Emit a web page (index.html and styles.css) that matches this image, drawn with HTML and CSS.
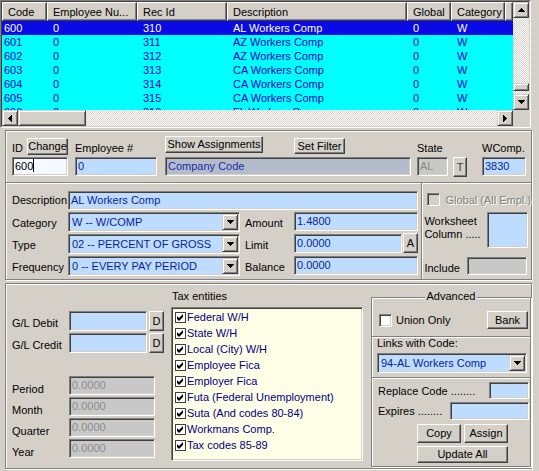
FILE: index.html
```html
<!DOCTYPE html>
<html>
<head>
  <meta charset="utf-8">
  <title>Deduction Codes</title>
  <link rel="stylesheet" href="styles.css">
</head>
<body>

<!-- code list -->
<div class="grid-view">
  <div class="gv-inner">
    <div class="gv-main">
      <div class="gv-table">
        <div class="gv-head">
          <div class="hc c1">Code</div>
          <div class="hc c2">Employee Nu...</div>
          <div class="hc c3">Rec Id</div>
          <div class="hc c4">Description</div>
          <div class="hc c5">Global</div>
          <div class="hc c6">Category</div>
          <div class="hc c7"></div>
        </div>
        <div class="gv-body">
          <div class="gv-row selected"><span class="c1">600</span><span class="c2">0</span><span class="c3">310</span><span class="c4">AL Workers Comp</span><span class="c5">0</span><span class="c6">W</span></div>
          <div class="gv-row"><span class="c1">601</span><span class="c2">0</span><span class="c3">311</span><span class="c4">AZ Workers Comp</span><span class="c5">0</span><span class="c6">W</span></div>
          <div class="gv-row"><span class="c1">602</span><span class="c2">0</span><span class="c3">312</span><span class="c4">AZ Workers Comp</span><span class="c5">0</span><span class="c6">W</span></div>
          <div class="gv-row"><span class="c1">603</span><span class="c2">0</span><span class="c3">313</span><span class="c4">CA Workers Comp</span><span class="c5">0</span><span class="c6">W</span></div>
          <div class="gv-row"><span class="c1">604</span><span class="c2">0</span><span class="c3">314</span><span class="c4">CA Workers Comp</span><span class="c5">0</span><span class="c6">W</span></div>
          <div class="gv-row"><span class="c1">605</span><span class="c2">0</span><span class="c3">315</span><span class="c4">CA Workers Comp</span><span class="c5">0</span><span class="c6">W</span></div>
          <div class="gv-row"><span class="c1">606</span><span class="c2">0</span><span class="c3">316</span><span class="c4">FL Workers Comp</span><span class="c5">0</span><span class="c6">W</span></div>
        </div>
      </div>
      <div class="vscroll">
        <div class="sb-btn"><svg width="7" height="4" viewBox="0 0 7 4"><path d="M3 0h1v1h-1z M2 1h3v1h-3z M1 2h5v1h-5z M0 3h7v1h-7z"/></svg></div>
        <div class="sb-track sb-track-top"></div>
        <div class="sb-btn sb-thumb-v"></div>
        <div class="sb-track"></div>
        <div class="sb-btn"><svg width="7" height="4" viewBox="0 0 7 4"><path d="M0 0h7v1h-7z M1 1h5v1h-5z M2 2h3v1h-3z M3 3h1v1h-1z"/></svg></div>
      </div>
    </div>
    <div class="gv-foot">
      <div class="hscroll">
        <div class="sb-btn"><svg width="4" height="7" viewBox="0 0 4 7"><path d="M0 3h1v1h-1z M1 2h1v3h-1z M2 1h1v5h-1z M3 0h1v7h-1z"/></svg></div>
        <div class="sb-btn sb-thumb-h"></div>
        <div class="sb-track"></div>
        <div class="sb-btn"><svg width="4" height="7" viewBox="0 0 4 7"><path d="M0 0h1v7h-1z M1 1h1v5h-1z M2 2h1v3h-1z M3 3h1v1h-1z"/></svg></div>
      </div>
      <div class="sb-corner"></div>
    </div>
  </div>
</div>

<!-- record header + amounts -->
<div class="panel top-panel">
  <div class="id-row">
    <div class="col col-id">
      <div class="cap"><span class="lbl">ID</span><button class="btn btn-change">Change</button></div>
      <div class="field field-id">600<span class="caret"></span></div>
    </div>
    <div class="col col-emp">
      <div class="cap"><span class="lbl">Employee #</span></div>
      <div class="field">0</div>
    </div>
    <div class="col col-co">
      <div class="cap"><button class="btn btn-show">Show Assignments</button><button class="btn btn-filter">Set Filter</button></div>
      <div class="field field-co">Company Code</div>
    </div>
    <div class="col col-state">
      <div class="cap"><span class="lbl">State</span></div>
      <div class="state-line"><div class="field field-off field-state">AL</div><button class="btn btn-t">T</button></div>
    </div>
    <div class="col col-wc">
      <div class="cap"><span class="lbl">WComp.</span></div>
      <div class="field">3830</div>
    </div>
  </div>

  <div class="detail-row">
    <div class="detail-main">
      <span class="dl dl-desc">Description</span>
      <div class="field field-desc">AL Workers Comp</div>

      <span class="dl">Category</span>
      <div class="combo"><span class="combo-text">W -- W/COMP</span><span class="sb-btn"><svg width="7" height="4" viewBox="0 0 7 4"><path d="M0 0h7v1h-7z M1 1h5v1h-5z M2 2h3v1h-3z M3 3h1v1h-1z"/></svg></span></div>
      <span class="dl dl-amt">Amount</span>
      <div class="field">1.4800</div>

      <span class="dl">Type</span>
      <div class="combo"><span class="combo-text">02 -- PERCENT OF GROSS</span><span class="sb-btn"><svg width="7" height="4" viewBox="0 0 7 4"><path d="M0 0h7v1h-7z M1 1h5v1h-5z M2 2h3v1h-3z M3 3h1v1h-1z"/></svg></span></div>
      <span class="dl dl-amt">Limit</span>
      <div class="limit-line"><div class="field field-limit">0.0000</div><button class="btn btn-a">A</button></div>

      <span class="dl">Frequency</span>
      <div class="combo"><span class="combo-text">0 -- EVERY PAY PERIOD</span><span class="sb-btn"><svg width="7" height="4" viewBox="0 0 7 4"><path d="M0 0h7v1h-7z M1 1h5v1h-5z M2 2h3v1h-3z M3 3h1v1h-1z"/></svg></span></div>
      <span class="dl dl-amt">Balance</span>
      <div class="field">0.0000</div>
    </div>

    <div class="detail-side">
      <div class="global-row"><span class="chk chk-off"></span><span class="txt-off">Global (All Empl.)</span></div>
      <div class="ws-row"><span class="ws-label">Worksheet<br>Column .....</span><div class="field ws-box"></div></div>
      <div class="inc-row"><span class="inc-label">Include</span><div class="field field-off inc-box"></div></div>
    </div>
  </div>
</div>

<!-- ledger, tax entities, advanced -->
<div class="panel bottom-panel">
  <div class="gl-area">
    <div class="frow gl-row"><span class="fl">G/L Debit</span><div class="field gl-field"></div><button class="btn btn-d">D</button></div>
    <div class="frow gl-row"><span class="fl">G/L Credit</span><div class="field gl-field"></div><button class="btn btn-d">D</button></div>
    <div class="totals">
      <div class="frow tot-row"><span class="fl">Period</span><div class="field field-off tot-field">0.0000</div></div>
      <div class="frow tot-row"><span class="fl">Month</span><div class="field field-off tot-field">0.0000</div></div>
      <div class="frow tot-row"><span class="fl">Quarter</span><div class="field field-off tot-field">0.0000</div></div>
      <div class="frow tot-row"><span class="fl">Year</span><div class="field field-off tot-field">0.0000</div></div>
    </div>
  </div>

  <div class="tax">
    <div class="tax-label">Tax entities</div>
    <div class="tax-list">
      <div class="tax-item"><span class="tick"><svg width="9" height="9" viewBox="0 0 9 9"><path d="M1 3L3 5L7 1V4L3 8L1 6Z"/></svg></span>Federal W/H</div>
      <div class="tax-item"><span class="tick"><svg width="9" height="9" viewBox="0 0 9 9"><path d="M1 3L3 5L7 1V4L3 8L1 6Z"/></svg></span>State W/H</div>
      <div class="tax-item"><span class="tick"><svg width="9" height="9" viewBox="0 0 9 9"><path d="M1 3L3 5L7 1V4L3 8L1 6Z"/></svg></span>Local (City) W/H</div>
      <div class="tax-item"><span class="tick"><svg width="9" height="9" viewBox="0 0 9 9"><path d="M1 3L3 5L7 1V4L3 8L1 6Z"/></svg></span>Employee Fica</div>
      <div class="tax-item"><span class="tick"><svg width="9" height="9" viewBox="0 0 9 9"><path d="M1 3L3 5L7 1V4L3 8L1 6Z"/></svg></span>Employer Fica</div>
      <div class="tax-item"><span class="tick"><svg width="9" height="9" viewBox="0 0 9 9"><path d="M1 3L3 5L7 1V4L3 8L1 6Z"/></svg></span>Futa (Federal Unemployment)</div>
      <div class="tax-item"><span class="tick"><svg width="9" height="9" viewBox="0 0 9 9"><path d="M1 3L3 5L7 1V4L3 8L1 6Z"/></svg></span>Suta (And codes 80-84)</div>
      <div class="tax-item"><span class="tick"><svg width="9" height="9" viewBox="0 0 9 9"><path d="M1 3L3 5L7 1V4L3 8L1 6Z"/></svg></span>Workmans Comp.</div>
      <div class="tax-item"><span class="tick"><svg width="9" height="9" viewBox="0 0 9 9"><path d="M1 3L3 5L7 1V4L3 8L1 6Z"/></svg></span>Tax codes 85-89</div>
    </div>
  </div>

  <div class="adv">
    <div class="adv-legend"><span>Advanced</span></div>
    <div class="adv-union">
      <span class="chk"></span><span class="union-text">Union Only</span>
      <button class="btn btn-bank">Bank</button>
    </div>
    <div class="adv-links">
      <div class="links-label">Links with Code:</div>
      <div class="combo combo-links"><span class="combo-text">94-AL Workers Comp</span><span class="sb-btn"><svg width="7" height="4" viewBox="0 0 7 4"><path d="M0 0h7v1h-7z M1 1h5v1h-5z M2 2h3v1h-3z M3 3h1v1h-1z"/></svg></span></div>
    </div>
    <div class="adv-replace">
      <div class="rep-row"><span class="rep-label">Replace Code ........</span><div class="field rep-code"></div></div>
      <div class="rep-row exp-row"><span class="rep-label">Expires ........</span><div class="field rep-exp"></div></div>
      <div class="act-row"><button class="btn btn-act">Copy</button><button class="btn btn-act">Assign</button></div>
      <div class="act-row act-row-2"><button class="btn btn-update">Update All</button></div>
    </div>
  </div>
</div>

</body>
</html>
```

FILE: styles.css
```css
body {
  margin: 0;
  width: 539px;
  height: 471px;
  overflow: hidden;
  background: #d4d0c8;
  font-family: "Liberation Sans", Arial, sans-serif;
  font-size: 11px;
  color: #000;
}

/* ---- shared bevels ---- */
.btn {
  box-sizing: border-box;
  height: 17px;
  padding: 0;
  border: 1px solid;
  border-color: #fff #404040 #404040 #fff;
  box-shadow: inset -1px -1px 0 #808080;
  background: #d4d0c8;
  font: inherit;
  line-height: 13px;
  color: #000;
  text-align: center;
}

.field {
  box-sizing: border-box;
  height: 19px;
  padding-left: 2px;
  border: 1px solid;
  border-color: #808080 #fff #fff #808080;
  box-shadow: inset 1px 1px 0 #404040, inset -1px -1px 0 #d4d0c8;
  background: #bddcff;
  color: #0a1e9a;
  line-height: 17px;
  white-space: nowrap;
  overflow: hidden;
}

.field-off {
  background: #c8c8c8;
  color: #8c8c8c;
}

.panel {
  box-sizing: border-box;
  width: 527px;
  margin-left: 5px;
  border: 1px solid #808080;
  box-shadow: inset 1px 1px 0 #fff, 1px 1px 0 #fff;
}

.sb-btn {
  box-sizing: border-box;
  width: 16px;
  height: 16px;
  flex: none;
  border: 1px solid;
  border-color: #d4d0c8 #404040 #404040 #d4d0c8;
  box-shadow: inset 1px 1px 0 #fff, inset -1px -1px 0 #808080;
  background: #d4d0c8;
  display: flex;
  align-items: center;
  justify-content: center;
}

.sb-btn svg {
  fill: #000;
  shape-rendering: crispEdges;
}

.sb-track {
  flex: 1;
  background: repeating-conic-gradient(#fff 0 25%, #d4d0c8 0 50%) 0 0 / 2px 2px;
}

.combo {
  box-sizing: border-box;
  display: flex;
  height: 20px;
  border: 1px solid;
  border-color: #808080 #fff #fff #808080;
  box-shadow: inset 1px 1px 0 #404040, inset -1px -1px 0 #d4d0c8;
  background: #bddcff;
  padding: 1px;
}

.combo-text {
  flex: 1;
  padding-left: 2px;
  line-height: 16px;
  color: #0a1e9a;
  white-space: nowrap;
  overflow: hidden;
}

.chk {
  box-sizing: border-box;
  width: 13px;
  height: 13px;
  flex: none;
  border: 1px solid;
  border-color: #808080 #fff #fff #808080;
  box-shadow: inset 1px 1px 0 #404040, inset -1px -1px 0 #d4d0c8;
  background: #fff;
}

/* ---- code list ---- */
.grid-view {
  box-sizing: border-box;
  width: 531px;
  height: 128px;
  border: 1px solid;
  border-color: #808080 #fff #fff #808080;
}

.gv-inner {
  box-sizing: border-box;
  height: 100%;
  border: 1px solid;
  border-color: #404040 #d4d0c8 #d4d0c8 #404040;
}

.gv-main {
  display: flex;
  height: 108px;
}

.gv-table {
  width: 511px;
  overflow: hidden;
}

.gv-head {
  display: flex;
  height: 19px;
}

.hc {
  box-sizing: border-box;
  height: 19px;
  flex: none;
  padding: 3px 0 0 5px;
  border: 1px solid;
  border-color: #fff #404040 #404040 #fff;
  box-shadow: inset -1px -1px 0 #808080;
  line-height: 13px;
  white-space: nowrap;
  overflow: hidden;
}

.c1 { width: 45px; }
.c2 { width: 90px; }
.c3 { width: 90px; }
.c4 { width: 180px; }
.c5 { width: 44px; }
.c6 { width: 54px; }
.c7 { width: 8px; }

.gv-body {
  height: 89px;
  overflow: hidden;
  background: #00ffff;
}

.gv-row {
  display: flex;
  height: 14px;
  line-height: 14px;
  background: #00ffff;
  color: #0000c0;
}

.gv-row span {
  box-sizing: border-box;
  flex: none;
  padding-left: 6px;
  white-space: nowrap;
  overflow: hidden;
}

.gv-row .c1 {
  padding-left: 2px;
}

.gv-row.selected {
  background: #0a0ae6;
  color: #fff;
}

.vscroll {
  width: 16px;
  display: flex;
  flex-direction: column;
}

.sb-track-top {
  flex: none;
  height: 65px;
}

.sb-thumb-v {
  height: 8px;
}

.gv-foot {
  display: flex;
  height: 16px;
}

.hscroll {
  display: flex;
  width: 511px;
}

.sb-thumb-h {
  width: 68px;
}

.sb-corner {
  width: 16px;
}

/* ---- record header ---- */
.top-panel {
  margin-top: 2px;
  height: 150px;
}

.id-row {
  box-sizing: border-box;
  display: flex;
  height: 52px;
  padding: 5px 0 0 6px;
  border-bottom: 1px solid #808080;
  box-shadow: 0 1px 0 #fff;
}

.col {
  display: flex;
  flex-direction: column;
  flex: none;
}

.col-id { width: 56px; margin-right: 7px; }
.col-emp { width: 82px; margin-right: 8px; }
.col-co { width: 246px; margin-right: 6px; }
.col-state { width: 50px; margin-right: 15px; }
.col-wc { width: 44px; }

.cap {
  display: flex;
  align-items: flex-start;
  height: 21px;
}

.lbl {
  padding-top: 6px;
  line-height: 13px;
  white-space: nowrap;
}

.btn-change {
  width: 41px;
  margin: 2px 0 0 auto;
}

.btn-show {
  width: 98px;
}

.btn-filter {
  width: 51px;
  height: 16px;
  margin: 2px 0 0 31px;
}

.field-id {
  background: #f4faff;
  color: #000;
}

.caret {
  display: inline-block;
  width: 1px;
  height: 13px;
  background: #000;
  vertical-align: -2px;
}

.field-co {
  background: #b4bccc;
  color: #1a2ea8;
}

.state-line {
  display: flex;
}

.field-state {
  width: 31px;
}

.btn-t {
  width: 14px;
  height: 20px;
  margin-left: 5px;
  color: #404040;
}

/* ---- amounts ---- */
.detail-row {
  display: flex;
  height: 96px;
}

.detail-main {
  box-sizing: border-box;
  width: 416px;
  padding: 8px 0 0 6px;
  display: grid;
  grid-template-columns: 56px 172px 54px 124px;
  grid-template-rows: 19px 20px 20px 20px;
  row-gap: 2px;
  align-content: start;
}

.dl {
  padding-top: 1px;
  line-height: 20px;
  white-space: nowrap;
}

.dl-desc {
  padding-top: 0;
  line-height: 19px;
}

.dl-amt {
  padding-left: 5px;
}

.field-desc {
  grid-column: 2 / 5;
}

.limit-line {
  display: flex;
  align-items: flex-start;
}

.field-limit {
  width: 108px;
}

.btn-a {
  width: 15px;
  height: 20px;
  margin: -1px 0 0 1px;
}

.detail-side {
  flex: 1;
  padding-left: 2px;
  border-left: 1px solid #808080;
  box-shadow: inset 1px 0 0 #fff;
}

.global-row {
  display: flex;
  align-items: center;
  height: 13px;
  margin-top: 10px;
}

.chk-off {
  margin-left: 3px;
  background: #d4d0c8;
}

.txt-off {
  margin-left: 5px;
  color: #808080;
  text-shadow: 1px 1px 0 #fff;
  white-space: nowrap;
}

.ws-row {
  display: flex;
  margin-top: 6px;
}

.ws-label {
  width: 63px;
  padding-top: 3px;
  line-height: 13px;
  white-space: nowrap;
}

.ws-box {
  width: 41px;
  height: 36px;
}

.inc-row {
  display: flex;
  margin-top: 9px;
}

.inc-label {
  width: 43px;
  padding-top: 2px;
  line-height: 18px;
}

.inc-box {
  width: 60px;
  height: 18px;
}

/* ---- ledger / tax / advanced ---- */
.bottom-panel {
  margin-top: 3px;
  height: 186px;
  display: flex;
  align-items: flex-start;
}

.gl-area {
  box-sizing: border-box;
  width: 165px;
  flex: none;
  padding: 27px 0 0 6px;
}

.frow {
  display: flex;
}

.fl {
  width: 57px;
  flex: none;
  white-space: nowrap;
}

.gl-row {
  height: 20px;
  margin-bottom: 2px;
}

.gl-row .fl {
  padding-top: 2px;
  line-height: 20px;
}

.gl-field {
  width: 78px;
  height: 20px;
}

.btn-d {
  width: 15px;
  height: 20px;
  margin-left: 2px;
}

.totals {
  margin-top: 23px;
}

.tot-row {
  height: 19px;
  margin-bottom: 2px;
}

.tot-row .fl {
  padding-top: 4px;
  line-height: 19px;
}

.tot-field {
  width: 86px;
}

.tax {
  width: 192px;
  flex: none;
}

.tax-label {
  padding: 6px 0 0 1px;
  line-height: 13px;
}

.tax-list {
  box-sizing: border-box;
  height: 154px;
  margin-top: 4px;
  padding: 1px 0 0 1px;
  border: 1px solid;
  border-color: #808080 #fff #fff #808080;
  box-shadow: inset 1px 1px 0 #404040, inset -1px -1px 0 #d4d0c8;
  background: #ffffe8;
}

.tax-item {
  display: flex;
  align-items: center;
  height: 16px;
  padding-left: 2px;
  color: #000080;
  white-space: nowrap;
}

.tick {
  box-sizing: border-box;
  width: 11px;
  height: 11px;
  margin-right: 1px;
  border: 1px solid #404040;
  background: #fff;
  display: flex;
}

.tick svg {
  fill: #000;
}

.adv {
  box-sizing: border-box;
  flex: 1;
  height: 170px;
  margin: 13px 0 0 8px;
  border: 1px solid #808080;
  box-shadow: inset 1px 1px 0 #fff, 1px 1px 0 #fff;
}

.adv-legend {
  margin-top: -8px;
  line-height: 13px;
  text-align: center;
}

.adv-legend span {
  padding: 0 2px;
  background: #d4d0c8;
}

.adv-union {
  display: flex;
  align-items: center;
  height: 18px;
  margin-top: 8px;
  padding-left: 7px;
}

.union-text {
  margin-left: 4px;
}

.btn-bank {
  width: 41px;
  height: 18px;
  margin: 0 2px 0 auto;
}

.adv-links {
  box-sizing: border-box;
  height: 41px;
  margin-top: 7px;
  padding-left: 5px;
  border-top: 1px solid #808080;
  box-shadow: inset 0 1px 0 #fff;
}

.links-label {
  line-height: 13px;
}

.combo-links {
  width: 150px;
  margin-top: 3px;
}

.adv-replace {
  padding: 0 1px 0 6px;
  border-top: 1px solid #808080;
  box-shadow: inset 0 1px 0 #fff;
}

.rep-row {
  display: flex;
  margin-top: 4px;
}

.rep-label {
  padding-top: 2px;
  line-height: 15px;
  white-space: nowrap;
}

.rep-code {
  width: 40px;
  height: 17px;
  margin-left: auto;
}

.exp-row {
  margin-top: 3px;
}

.rep-exp {
  width: 79px;
  height: 18px;
  margin-left: auto;
}

.act-row {
  display: flex;
  margin-top: 4px;
  padding-left: 39px;
}

.act-row-2 {
  margin-top: 3px;
}

.btn-act {
  width: 44px;
  height: 19px;
  margin-right: 3px;
}

.btn-update {
  width: 91px;
  height: 17px;
}
```
